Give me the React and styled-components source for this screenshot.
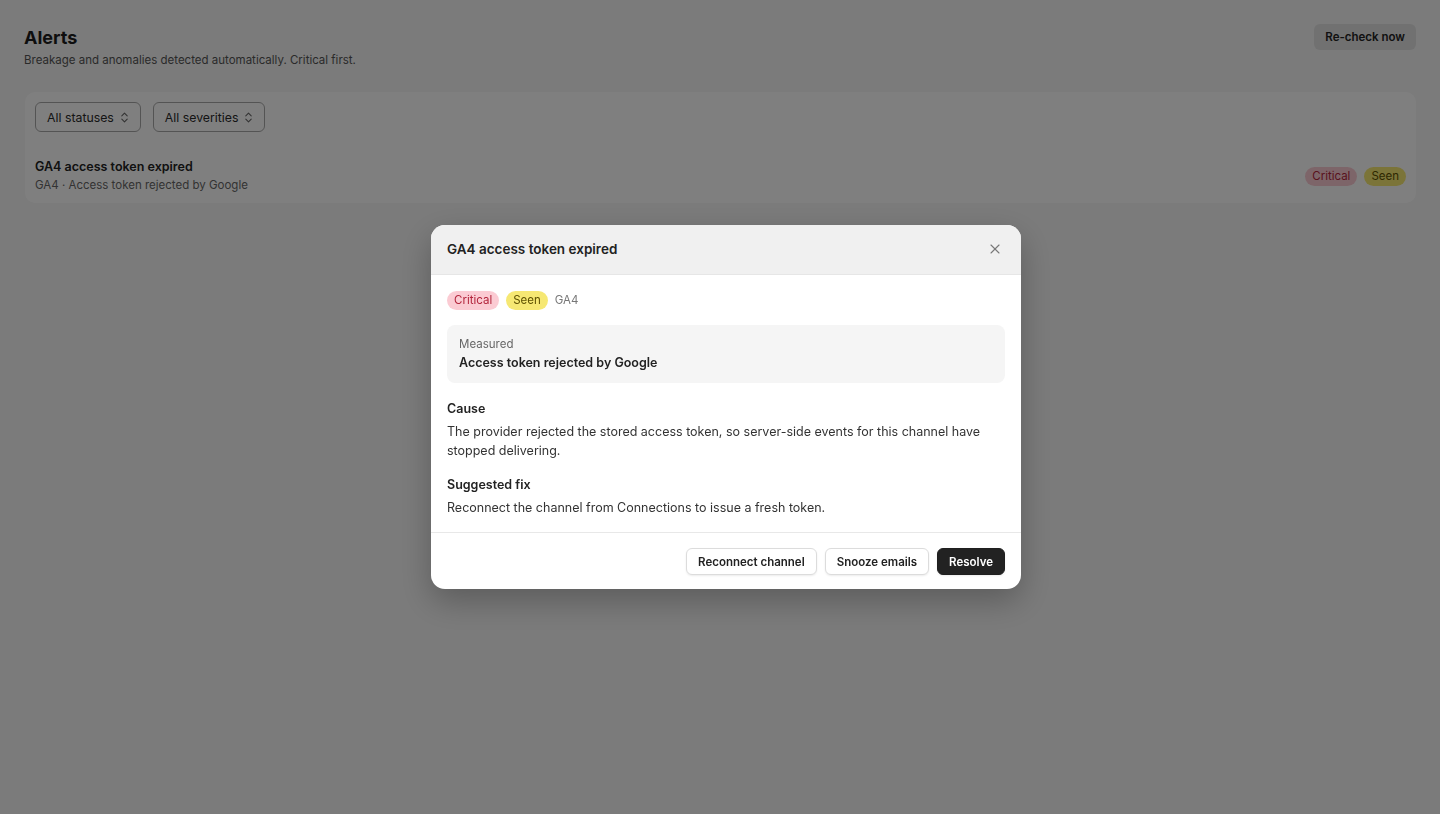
import React from 'react'
import styled, { createGlobalStyle } from 'styled-components'
import { ChevronsUpDown, X } from 'lucide-react'

const Global = createGlobalStyle`
  * { box-sizing: border-box; }
  html, body { margin: 0; padding: 0; }
  body {
    font-family: Inter, "Noto Sans", "Liberation Sans", sans-serif;
    background: #f6f6f6;
    color: #222;
    -webkit-font-smoothing: antialiased;
  }
`

const Page = styled.div`
  min-height: 814px;
  padding: 24px 24px;
`

const Header = styled.header`
  display: flex;
  justify-content: space-between;
  align-items: flex-start;
`

const Title = styled.h1`
  margin: 0;
  padding-top: 2px;
  font-size: 18px;
  line-height: 24px;
  font-weight: 700;
  color: #1c1c1c;
`

const Subtitle = styled.p`
  margin: 2px 0 0;
  font-size: 11.5px;
  line-height: 16px;
  color: #555;
`

const GhostButton = styled.button`
  height: 26px;
  padding: 0 11px;
  border: none;
  border-radius: 6px;
  background: #e2e2e2;
  font-family: inherit;
  font-size: 11.5px;
  font-weight: 600;
  color: #222;
`

const Card = styled.section`
  margin-top: 24px;
  margin-left: 1px;
  background: #fff;
  border-radius: 10px;
  padding: 10px 10px 9px;
`

const Filters = styled.div`
  display: flex;
  gap: 12px;
`

const Select = styled.button`
  display: flex;
  align-items: center;
  gap: 4px;
  height: 30px;
  padding: 0 9px 0 11px;
  border: 1px solid #a9a9a9;
  border-radius: 6px;
  background: #fff;
  font-family: inherit;
  font-size: 12.3px;
  color: #2a2a2a;
  svg { color: #666; }
`

const AlertRow = styled.div`
  display: flex;
  justify-content: space-between;
  align-items: center;
  margin-top: 26px;
`

const RowTitle = styled.div`
  font-size: 12.5px;
  line-height: 17px;
  font-weight: 600;
  color: #222;
`

const RowSub = styled.div`
  margin-top: 2px;
  font-size: 11.5px;
  line-height: 17px;
  color: #666;
`

const Badges = styled.div`
  display: flex;
  align-items: center;
  gap: 7px;
`

const Badge = styled.span`
  display: inline-flex;
  align-items: center;
  height: 19px;
  padding: 0 7px;
  border-radius: 10px;
  font-size: 11.5px;
  background: ${p => (p.tone === 'critical' ? '#fbcbd3' : '#f6e873')};
  color: ${p => (p.tone === 'critical' ? '#b3263d' : '#5d5000')};
`

const Muted = styled.span`
  font-size: 11.5px;
  color: #777;
`

const Overlay = styled.div`
  position: fixed;
  inset: 0;
  padding-left: 12px;
  background: rgba(0, 0, 0, 0.5);
  display: flex;
  align-items: center;
  justify-content: center;
`

const Modal = styled.div`
  width: 590px;
  background: #fff;
  border-radius: 14px;
  overflow: hidden;
  box-shadow: 0 12px 32px rgba(0, 0, 0, 0.25);
`

const ModalHead = styled.div`
  display: flex;
  justify-content: space-between;
  align-items: center;
  height: 50px;
  padding: 0 18px 0 16px;
  background: #f0f0f0;
  border-bottom: 1px solid #e6e6e6;
`

const ModalTitle = styled.h2`
  margin: 0;
  font-size: 13.5px;
  font-weight: 600;
  color: #222;
`

const Close = styled.button`
  display: flex;
  border: none;
  background: none;
  padding: 0;
  color: #777;
`

const ModalBody = styled.div`
  padding: 16px 16px 15px;
`

const Measured = styled.div`
  margin-top: 15px;
  padding: 11px 12px;
  background: #f5f5f5;
  border-radius: 8px;
`

const Label = styled.div`
  font-size: 11.5px;
  line-height: 16px;
  color: #666;
`

const Strong = styled.div`
  margin-top: 2px;
  font-size: 12.5px;
  line-height: 18px;
  font-weight: 600;
  color: #222;
`

const Section = styled.div`
  margin-top: ${p => p.gap || 16}px;
`

const SectionTitle = styled.div`
  font-size: 12.5px;
  line-height: 20px;
  font-weight: 600;
  color: #222;
`

const Text = styled.p`
  margin: 3px 0 0;
  font-size: 12.5px;
  line-height: 19.5px;
  color: #333;
`

const Footer = styled.div`
  display: flex;
  justify-content: flex-end;
  gap: 8px;
  padding: 15px 16px 14px;
  border-top: 1px solid #e8e8e8;
`

const Action = styled.button`
  height: 27px;
  padding: 0 11px;
  border-radius: 6px;
  font-family: inherit;
  font-size: 11.5px;
  font-weight: 600;
  border: 1px solid ${p => (p.primary ? '#1f1f1f' : '#dcdcdc')};
  background: ${p => (p.primary ? '#222' : '#fff')};
  color: ${p => (p.primary ? '#fff' : '#222')};
  box-shadow: 0 1px 2px rgba(0, 0, 0, 0.08);
`

export default function App() {
  return (
    <>
      <Global />
      <Page>
        <Header>
          <div>
            <Title>Alerts</Title>
            <Subtitle>Breakage and anomalies detected automatically. Critical first.</Subtitle>
          </div>
          <GhostButton>Re-check now</GhostButton>
        </Header>

        <Card>
          <Filters>
            <Select>All statuses <ChevronsUpDown size={13} /></Select>
            <Select>All severities <ChevronsUpDown size={13} /></Select>
          </Filters>
          <AlertRow>
            <div>
              <RowTitle>GA4 access token expired</RowTitle>
              <RowSub>GA4 · Access token rejected by Google</RowSub>
            </div>
            <Badges>
              <Badge tone="critical">Critical</Badge>
              <Badge tone="seen">Seen</Badge>
            </Badges>
          </AlertRow>
        </Card>
      </Page>

      <Overlay>
        <Modal>
          <ModalHead>
            <ModalTitle>GA4 access token expired</ModalTitle>
            <Close><X size={16} strokeWidth={1.6} /></Close>
          </ModalHead>
          <ModalBody>
            <Badges>
              <Badge tone="critical">Critical</Badge>
              <Badge tone="seen">Seen</Badge>
              <Muted>GA4</Muted>
            </Badges>
            <Measured>
              <Label>Measured</Label>
              <Strong>Access token rejected by Google</Strong>
            </Measured>
            <Section>
              <SectionTitle>Cause</SectionTitle>
              <Text>The provider rejected the stored access token, so server-side events for this channel have stopped delivering.</Text>
            </Section>
            <Section gap={14}>
              <SectionTitle>Suggested fix</SectionTitle>
              <Text>Reconnect the channel from Connections to issue a fresh token.</Text>
            </Section>
          </ModalBody>
          <Footer>
            <Action>Reconnect channel</Action>
            <Action>Snooze emails</Action>
            <Action primary>Resolve</Action>
          </Footer>
        </Modal>
      </Overlay>
    </>
  )
}
